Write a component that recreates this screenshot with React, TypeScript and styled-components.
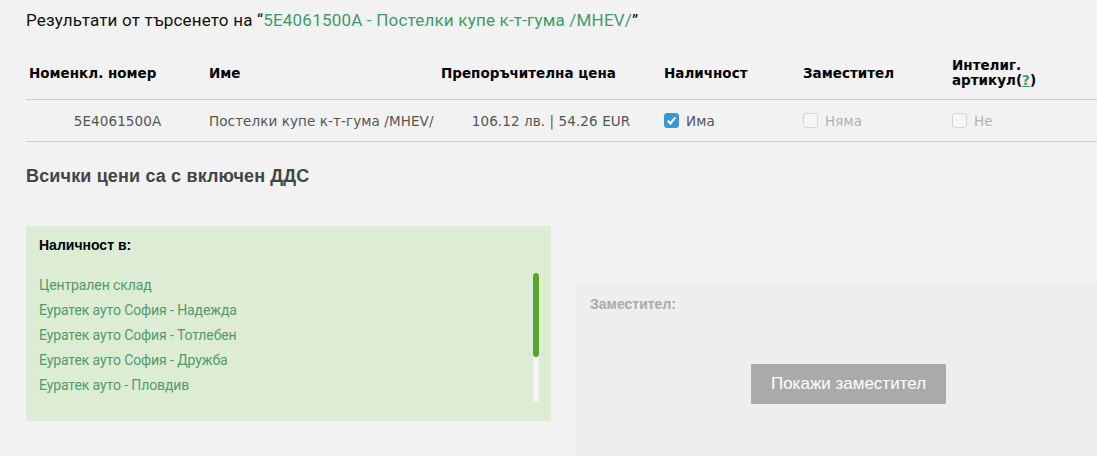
import React from 'react';
import styled, { createGlobalStyle } from 'styled-components';

const GlobalStyle = createGlobalStyle`
  body {
    margin: 0;
    background: #f2f2f2;
    font-family: 'Liberation Sans', Arial, sans-serif;
  }
`;

const stores = [
  'Централен склад',
  'Еуратек ауто София - Надежда',
  'Еуратек ауто София - Тотлебен',
  'Еуратек ауто София - Дружба',
  'Еуратек ауто - Пловдив',
];

const App: React.FC = () => {
  return (
    <Page>
      <GlobalStyle />
      <Title>
        Результати от търсенето на “<TitleQuery>5E4061500A - Постелки купе к-т-гума /MHEV/</TitleQuery>”
      </Title>

      <Table>
        <HeadRow>
          <HeadCell>Номенкл. номер</HeadCell>
          <HeadCell>Име</HeadCell>
          <HeadCell>Препоръчителна цена</HeadCell>
          <HeadCell>Наличност</HeadCell>
          <HeadCell>Заместител</HeadCell>
          <HeadCell>
            Интелиг.
            <br />
            артикул(<HelpLink>?</HelpLink>)
          </HeadCell>
        </HeadRow>
        <BodyRow>
          <Cell center>5E4061500A</Cell>
          <Cell>Постелки купе к-т-гума /MHEV/</Cell>
          <Cell center>106.12 лв. | 54.26 EUR</Cell>
          <Cell>
            <Check checked>
              <svg width="11" height="11" viewBox="0 0 10 10">
                <path d="M1.6 5.2 L4 7.6 L8.6 2.2" stroke="#fff" strokeWidth="1.9" fill="none" />
              </svg>
            </Check>
            Има
          </Cell>
          <Cell muted>
            <Check />
            Няма
          </Cell>
          <Cell muted>
            <Check />
            Не
          </Cell>
        </BodyRow>
      </Table>

      <VatNote>Всички цени са с включен ДДС</VatNote>

      <Panels>
        <StockBox>
          <BoxTitle>Наличност в:</BoxTitle>
          <ListRow>
            <StoreList>
              {stores.map((s) => (
                <StoreItem key={s}>{s}</StoreItem>
              ))}
            </StoreList>
            <ScrollTrack>
              <ScrollThumb />
            </ScrollTrack>
          </ListRow>
        </StockBox>

        <SubstituteBox>
          <SubTitle>Заместител:</SubTitle>
          <ButtonRow>
            <ShowButton>Покажи заместител</ShowButton>
          </ButtonRow>
        </SubstituteBox>
      </Panels>
    </Page>
  );
};

export default App;

const Page = styled.div`
  width: 1097px;
  height: 456px;
  overflow: hidden;
  padding: 10px 0 0 26px;
  box-sizing: border-box;
`;

const Title = styled.div`
  font-family: Roboto, 'Noto Sans', sans-serif;
  font-size: 17px;
  line-height: 20px;
  color: #111;
  letter-spacing: 0.2px;
`;

const TitleQuery = styled.span`
  color: #3f9a6a;
`;

const Table = styled.div`
  margin-top: 20px;
  font-family: 'DejaVu Sans', Verdana, sans-serif;
  font-size: 13.5px;
`;

const columns = '180px 232px 223px 139px 149px 1fr';

const HeadRow = styled.div`
  display: grid;
  grid-template-columns: ${columns};
  align-items: center;
  height: 50px;
  padding-bottom: 3px;
  box-sizing: border-box;
  border-bottom: 1px solid #cccccc;
`;

const HeadCell = styled.div`
  padding-left: 3px;
  font-weight: bold;
  color: #000;
  line-height: 15px;
`;

const HelpLink = styled.span`
  color: #3f9a6a;
  text-decoration: underline;
`;

const BodyRow = styled.div`
  display: grid;
  grid-template-columns: ${columns};
  align-items: center;
  height: 41px;
  border-bottom: 1px solid #cccccc;
`;

const Cell = styled.div<{ center?: boolean; muted?: boolean }>`
  display: flex;
  align-items: center;
  justify-content: ${(p) => (p.center ? 'center' : 'flex-start')};
  padding-left: 3px;
  color: ${(p) => (p.muted ? '#b0b0b0' : '#555')};
  letter-spacing: 0.1px;
`;

const Check = styled.span<{ checked?: boolean }>`
  display: inline-flex;
  align-items: center;
  justify-content: center;
  width: 15px;
  height: 15px;
  margin-right: 7px;
  border-radius: 3px;
  box-sizing: border-box;
  background: ${(p) => (p.checked ? '#3598d0' : '#f5f5f5')};
  border: 1px solid ${(p) => (p.checked ? '#3598d0' : '#d4d4d4')};
`;

const VatNote = styled.div`
  margin-top: 24px;
  font-size: 18px;
  font-weight: bold;
  color: #444;
  line-height: 20px;
  letter-spacing: 0.15px;
`;

const Panels = styled.div`
  display: flex;
  align-items: flex-start;
  gap: 24px;
  margin-top: 40px;
`;

const StockBox = styled.div`
  width: 525px;
  height: 195px;
  box-sizing: border-box;
  background: #dcedd3;
  padding: 11px 13px 0 13px;
`;

const BoxTitle = styled.div`
  font-size: 14px;
  font-weight: bold;
  color: #000;
  line-height: 16px;
`;

const ListRow = styled.div`
  display: flex;
  margin-top: 20px;
`;

const StoreList = styled.div`
  flex: 1;
  height: 129px;
  overflow: hidden;
`;

const StoreItem = styled.div`
  font-family: Roboto, 'Noto Sans', sans-serif;
  font-size: 14px;
  line-height: 25px;
  color: #529a6e;
  letter-spacing: -0.1px;
`;

const ScrollTrack = styled.div`
  width: 6px;
  height: 129px;
  margin-left: 8px;
  margin-right: -1px;
  border-radius: 3px;
  background: #f4f4f4;
`;

const ScrollThumb = styled.div`
  height: 84px;
  border-radius: 3px;
  background: #58a52e;
`;

const SubstituteBox = styled.div`
  flex: 1;
  margin-top: 57px;
  height: 200px;
  background: #eeeeee;
  padding: 14px 15px 0 15px;
`;

const SubTitle = styled.div`
  font-size: 14px;
  font-weight: bold;
  color: #aaaaaa;
  line-height: 14px;
`;

const ButtonRow = styled.div`
  display: flex;
  justify-content: center;
  margin-top: 53px;
  padding-left: 25px;
`;

const ShowButton = styled.button`
  width: 195px;
  height: 40px;
  border: none;
  background: #aaaaaa;
  color: #fff;
  font-family: 'Liberation Sans', Arial, sans-serif;
  font-size: 17px;
`;
